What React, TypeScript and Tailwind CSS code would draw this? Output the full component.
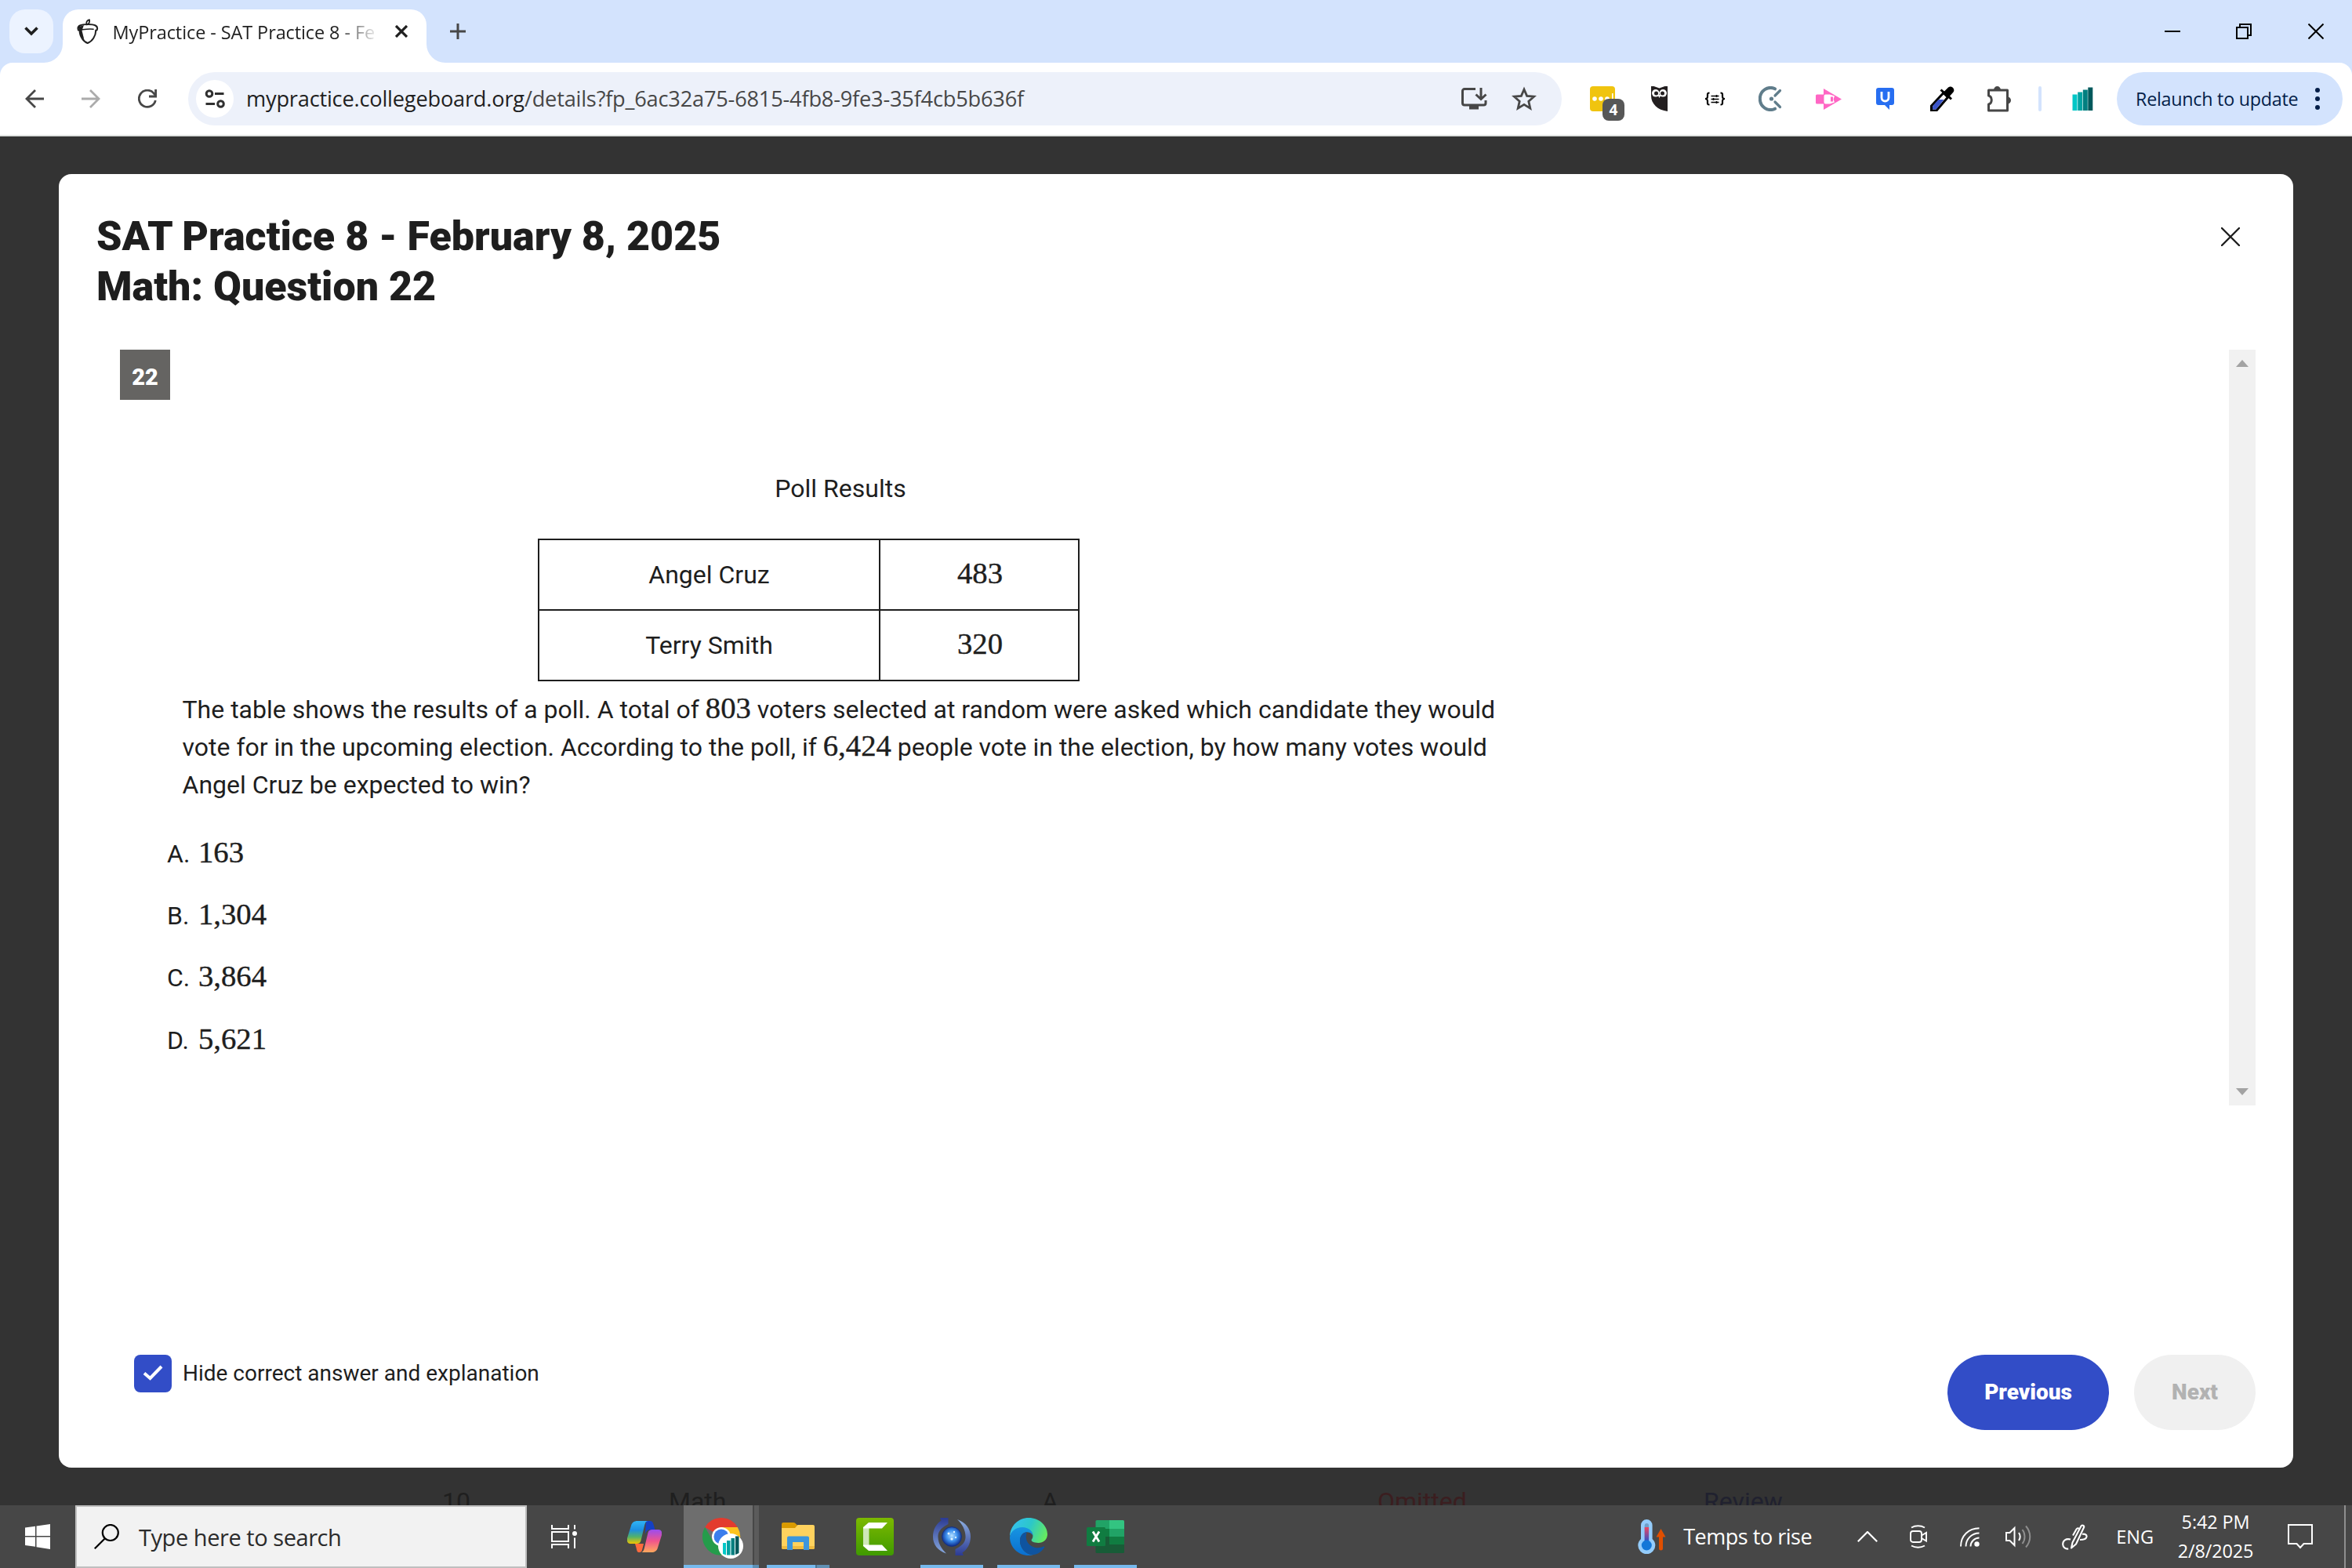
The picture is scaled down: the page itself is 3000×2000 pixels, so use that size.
import type { ReactNode } from "react";

/* ---------- Browser chrome ---------- */

function TabStrip() {
  return (
    <div className="flex h-20 shrink-0 items-start bg-[#d3e3fd] pt-3">
      <button className="ml-3 flex h-14 w-14 items-center justify-center rounded-[20px] bg-[#ecf3ff]">
        <svg width="18" height="14" viewBox="0 0 18 14" fill="none" stroke="#1f1f1f" strokeWidth="3.6">
          <path d="M1.5 2.5 9 10l7.5-7.5" />
        </svg>
      </button>
      <div className="relative ml-3 flex h-[68px] w-[464px] items-start rounded-t-[20px] bg-white">
        <svg className="absolute -left-6 bottom-0" width="24" height="24" viewBox="0 0 24 24">
          <path d="M24 0A24 24 0 0 1 0 24H24Z" fill="#fff" />
        </svg>
        <svg className="absolute -right-6 bottom-0" width="24" height="24" viewBox="0 0 24 24">
          <path d="M0 0A24 24 0 0 0 24 24H0Z" fill="#fff" />
        </svg>
        <svg className="ml-[18px] mt-3" width="28" height="32" viewBox="0 0 28 32" fill="none" stroke="#1f1f1f" strokeLinecap="round" strokeLinejoin="round">
          <path d="M12.600 7.400C11.400 4.400 13 1.900 16 1.200c.6 2.600 0 5-3 6.200" strokeWidth="1.800" />
          <path d="M2 14.500C-.500 8.500 6 7 14 7s14 1.500 11.600 7.500" strokeWidth="2" />
          <path d="M2.200 14.500c6-.600 13-2.500 18.800-1.200" strokeWidth="1.600" />
          <path d="M3.600 14.500C3.600 23 9 29.600 13.800 31 19.500 29 24.400 22 24.200 14.500" strokeWidth="2" />
          <path d="M1.500 10.500 9 8 6.500 15l3 12C5.500 23.500 3.600 18 3 14.500Z" fill="#1f1f1f" stroke="none" />
        </svg>
        <div className="ml-[17.5px] mt-px h-14 w-[335.5px] overflow-hidden whitespace-nowrap bg-gradient-to-r from-[#1f1f1f] from-85% to-[#1f1f1f]/10 bg-clip-text font-['Open_Sans'] text-[23.5px] leading-[56px] tracking-[-0.1px] text-transparent">
          MyPractice - SAT Practice 8 - Fe
        </div>
        <svg className="ml-[25px] mt-5" width="16" height="16" viewBox="0 0 16 16" stroke="#1f1f1f" strokeWidth="3.2">
          <path d="M1 1l14 14M15 1 1 15" />
        </svg>
      </div>
      <svg className="ml-[30px] mt-[18px]" width="20" height="20" viewBox="0 0 20 20" stroke="#474747" strokeWidth="3">
        <path d="M10 0v20M0 10h20" />
      </svg>
      <div className="flex flex-1 justify-end">
        <svg className="mt-[18px]" width="20" height="20" viewBox="0 0 20 20" stroke="#000" strokeWidth="2">
          <path d="M0 10h20" />
        </svg>
        <svg className="ml-[71px] mt-[18px]" width="20" height="20" viewBox="0 0 20 20" fill="none" stroke="#000" strokeWidth="2">
          <path d="M1 5h14v14H1ZM5 5V1h14v14h-4" />
        </svg>
        <svg className="ml-[72px] mr-9 mt-[18px]" width="20" height="20" viewBox="0 0 20 20" stroke="#000" strokeWidth="2">
          <path d="M.5.5l19 19M19.500.5l-19 19" />
        </svg>
      </div>
    </div>
  );
}

function Omnibox() {
  return (
    <div className="ml-10 flex h-[68px] w-[1752px] items-center rounded-full bg-[#edf1fa]">
      <div className="ml-2.5 flex h-12 w-12 items-center justify-center rounded-full bg-white">
        <svg width="26" height="26" viewBox="0 0 26 26" fill="none" stroke="#303030" strokeWidth="3">
          <circle cx="6" cy="6.500" r="3.800" />
          <path d="M13 6.500h11.500M1.500 19.500H13" />
          <circle cx="20.500" cy="19.500" r="3.800" />
        </svg>
      </div>
      <div className="ml-4 h-[68px] whitespace-nowrap font-['Open_Sans'] text-[27.2px] leading-[67px] tracking-[-0.2px] text-[#1f1f1f]">
        mypractice.collegeboard.org<span className="text-[#474747]">/details?fp_6ac32a75-6815-4fb8-9fe3-35f4cb5b636f</span>
      </div>
      <div className="mr-8 flex flex-1 items-center justify-end">
        <svg width="34" height="30" viewBox="0 0 34 30" fill="none" stroke="#474747" strokeWidth="3">
          <path d="M19 2.500H5a2.500 2.500 0 0 0-2.500 2.500v15.500A2.500 2.500 0 0 0 5 23h24.500a2.500 2.500 0 0 0 2.500-2.500V17" />
          <path d="M11 23h12v5.500H11Z" fill="#474747" stroke="none" />
          <path d="M26 1v13.500M19.500 9.500l6.500 6 6.500-6" />
        </svg>
        <svg className="ml-[31px]" width="32" height="32" viewBox="0 0 32 32" fill="none" stroke="#474747" strokeWidth="2.800">
          <path d="M16 4l3.600 8.400 9 .8-6.800 6 2 8.900-7.800-4.700-7.800 4.700 2-8.900-6.800-6 9-.8Z" />
        </svg>
      </div>
    </div>
  );
}

function Extensions() {
  return (
    <>
      <div className="relative ml-9 h-8 w-8">
        <svg width="32" height="32" viewBox="0 0 32 32">
          <rect width="32" height="32" rx="4" fill="#f0c40f" />
          <circle cx="6" cy="16" r="2.800" fill="#fff" />
          <circle cx="14" cy="16" r="2.800" fill="#fff" />
          <circle cx="22" cy="16" r="2.800" fill="#fff" />
          <path d="M28.800 9v9" stroke="#fff" strokeWidth="1.600" />
        </svg>
        <span className="absolute left-4 top-4 flex h-7 w-7 items-center justify-center rounded-[8px] bg-[#575757] font-['Open_Sans'] text-[19px] font-bold leading-none text-white">
          4
        </span>
      </div>
      <svg className="ml-[46px]" width="21" height="32" viewBox="0 0 21 32">
        <path d="M0 0h21v32C8 30.500 0 22 0 12Z" fill="#231f20" />
        <path d="M3.500 0 10.500 2.600 17.500 0Z" fill="#fff" />
        <circle cx="5.800" cy="8.800" r="4.800" fill="#fff" />
        <circle cx="15.200" cy="8.800" r="4.800" fill="#fff" />
        <circle cx="6.500" cy="9" r="2.500" fill="#231f20" />
        <circle cx="14.500" cy="9" r="2.500" fill="#231f20" />
        <path d="M8.500 11h4l-2 4Z" fill="#fff" />
      </svg>
      <svg className="ml-[47px]" width="27" height="18" viewBox="0 0 27 18" fill="none" stroke="#000" strokeWidth="2.200">
        <path d="M6.500 1.500C3.500 1.500 4 3 4 5.500S3.500 9 1 9c2.500 0 3 1 3 3.500s-.500 4 2.500 4" />
        <path d="M20.500 1.500c3 0 2.500 1.500 2.500 4S23.500 9 26 9c-2.500 0-3 1-3 3.500s.500 4-2.500 4" />
        <path d="M8.500 5.500h10M8.500 9.500h10M8.500 13.500h10" strokeWidth="1.600" />
        <path d="M15.500 4v3M11.500 8v3M15.500 12v3" strokeWidth="1.600" />
      </svg>
      <svg className="ml-[42px]" width="30" height="32" viewBox="0 0 30 32" fill="none" stroke="#607d8b" strokeWidth="4" strokeLinecap="round">
        <path d="M21 3.300A13.500 14 0 1 0 21 28.700" />
        <path d="M21 12l6.500-6.500M21 20l6.500 6.500" strokeWidth="3.200" />
        <circle cx="16.500" cy="16" r="2.600" fill="#607d8b" stroke="none" />
      </svg>
      <svg className="ml-[43px]" width="33" height="27" viewBox="0 0 33 27" fill="#ff66c4">
        <path d="M1.500 7.500H10v12H1.500A1.500 1.500 0 0 1 0 18V9A1.500 1.500 0 0 1 1.500 7.500Z" />
        <path d="M10 0 33 13.500 10 27Z" />
        <path d="M12.500 7.500H18l6 2-1.500 4 1.500 4-6 2h-5.500a2 2 0 0 1-2-2v-8a2 2 0 0 1 2-2Z" fill="#fff" />
        <path d="M19 10.500h3v6h-3Z" />
      </svg>
      <svg className="ml-11" width="23" height="28" viewBox="0 0 23 28">
        <path d="M3 0h17a3 3 0 0 1 3 3v16a3 3 0 0 1-3 3h-3v6l-6-6H3a3 3 0 0 1-3-3V3a3 3 0 0 1 3-3Z" fill="#276ef1" />
        <path d="M7 5v7.500a4.500 4.500 0 0 0 9 0V5" fill="none" stroke="#fff" strokeWidth="2.800" />
      </svg>
      <svg className="ml-[46px]" width="31" height="32" viewBox="0 0 31 32">
        <path d="M1.500 31v-6L17 8.500 22.500 14 8 31Z" fill="#fff" stroke="#000" strokeWidth="3" />
        <path d="M3 29.500v-4L10.500 17h7L7.500 29.500Z" fill="#3b55c9" />
        <path d="M12.500 5.500l2-2 3.500 3L23 1.500c4-3.500 9.500 2 6.500 6L25 12.500l3 3-2 2Z" fill="#000" />
      </svg>
      <svg className="ml-10" width="34" height="34" viewBox="0 0 34 34" fill="none" stroke="#474747" strokeWidth="3">
        <path d="M3.500 6h24v26h-24V24c5-1.500 5-9.500 0-11Z" strokeLinejoin="round" />
        <path d="M10 6a4.500 5 0 0 1 9 0ZM27.500 14.500a4.500 4.500 0 0 1 0 9Z" fill="#474747" stroke="none" />
      </svg>
      <div className="ml-[33px] h-8 w-1 rounded-full bg-[#d3e3fd]" />
      <svg className="ml-[39px]" width="27" height="30" viewBox="0 0 27 30">
        <path d="M.5 9.500h6V30h-6Z" fill="#00c7c7" />
        <path d="M7.200 6.500h6V30h-6Z" fill="#00a3a3" />
        <path d="M13.800 3.500h6V30h-6Z" fill="#007f80" />
        <path d="M20.300.5h6V30h-6Z" fill="#00595c" />
      </svg>
    </>
  );
}

function Toolbar() {
  return (
    <div className="h-[94px] shrink-0 bg-[#d3e3fd]">
      <div className="flex h-[94px] items-center rounded-t-2xl border-b-2 border-[#e0e3e1] bg-white">
        <svg className="ml-8" width="24" height="24" viewBox="0 0 24 24" fill="none" stroke="#474747" strokeWidth="2.800">
          <path d="M24 12H2M13 1 2 12l11 11" />
        </svg>
        <svg className="ml-12" width="24" height="24" viewBox="0 0 24 24" fill="none" stroke="#ababab" strokeWidth="2.800">
          <path d="M0 12h22M11 1l11 11-11 11" />
        </svg>
        <svg className="ml-12" width="24" height="24" viewBox="0 0 24 24" fill="none" stroke="#474747" strokeWidth="2.800">
          <path d="M22.300 14A10.600 10.600 0 1 1 20 4.900l2.500 3" />
          <path d="M22.600 0v9H14" />
        </svg>
        <Omnibox />
        <Extensions />
        <button className="ml-[30px] flex h-[68px] w-[288px] items-center rounded-full bg-[#d3e3fd] text-[#041e49]">
          <span className="ml-6 whitespace-nowrap font-['Open_Sans'] text-[23.3px] leading-[66px] tracking-[-0.25px]">Relaunch to update</span>
          <svg className="ml-[21px]" width="8" height="28" viewBox="0 0 8 28" fill="#041e49">
            <circle cx="4" cy="3" r="3" />
            <circle cx="4" cy="14" r="3" />
            <circle cx="4" cy="25" r="3" />
          </svg>
        </button>
      </div>
    </div>
  );
}

/* ---------- Question modal ---------- */

function MathText({ children }: { children: ReactNode }) {
  return <span className="font-['Liberation_Serif',serif] text-[38.7px] leading-none [-webkit-text-stroke:0.4px_#1e1e1e]">{children}</span>;
}

const results = [
  { name: "Angel Cruz", votes: "483" },
  { name: "Terry Smith", votes: "320" },
];

const choices = [
  { letter: "A.", value: "163" },
  { letter: "B.", value: "1,304" },
  { letter: "C.", value: "3,864" },
  { letter: "D.", value: "5,621" },
];

function Question() {
  return (
    <div className="flex-1">
      <div className="ml-[30px] flex h-16 w-16 justify-center bg-[#656462] text-[29px] font-black leading-[71px] text-white">22</div>
      <div className="ml-[111px] mt-[89px] w-[1676px] text-center text-[32px] leading-[48px]">Poll Results</div>
      <div className="ml-[563px] mt-10 w-[691px] divide-y-2 divide-[#1e1e1e] border-2 border-[#1e1e1e]">
        {results.map((r) => (
          <div key={r.name} className="flex h-[88px] divide-x-2 divide-[#1e1e1e] text-center text-[32px] leading-[88px] first:h-[90px]">
            <div className="w-[435px]">{r.name}</div>
            <div className="flex-1">
              <div className="pl-0.5 font-['Liberation_Serif',serif] text-[38.7px] leading-[84px] [-webkit-text-stroke:0.4px_#1e1e1e]">{r.votes}</div>
            </div>
          </div>
        ))}
      </div>
      <div className="ml-[109.5px] mt-3 whitespace-nowrap text-[32px] leading-[48px]">
        <div className="h-12">
          The table shows the results of a poll. A total of <MathText>803</MathText> voters selected at random were asked which candidate they would
        </div>
        <div className="h-12">
          vote for in the upcoming election. According to the poll, if <MathText>6,424</MathText> people vote in the election, by how many votes would
        </div>
        <div className="h-12">Angel Cruz be expected to win?</div>
      </div>
      <div className="ml-[90px] mt-10 flex flex-col gap-[31.2px] text-[32px] leading-[48px]">
        {choices.map((c) => (
          <div key={c.letter} className="flex h-12">
            <span className="w-10">{c.letter}</span>
            <span className="font-['Liberation_Serif',serif] text-[38.7px] leading-[44px] [-webkit-text-stroke:0.4px_#1e1e1e]">{c.value}</span>
          </div>
        ))}
      </div>
    </div>
  );
}

function Modal() {
  return (
    <div className="mx-[75px] mt-12 h-[1650px] shrink-0 rounded-2xl bg-white px-12 pt-12 text-[#1e1e1e]">
      <div className="flex justify-between">
        <h1 className="text-[52px] font-black leading-[64px]">
          SAT Practice 8 - February 8, 2025
          <br />
          Math: Question 22
        </h1>
        <svg className="mr-5 mt-5" width="24" height="24" viewBox="0 0 24 24" stroke="#1e1e1e" strokeWidth="2.400" strokeLinecap="round">
          <path d="M1 1l22 22M23 1 1 23" />
        </svg>
      </div>
      <div className="mt-12 flex h-[964px]">
        <Question />
        <div className="flex w-[34px] flex-col items-center justify-between bg-[#f1f1f1] py-3">
          <svg width="16" height="10" viewBox="0 0 16 10" fill="#a3a3a3">
            <path d="M0 10 8 1l8 9Z" />
          </svg>
          <svg width="16" height="10" viewBox="0 0 16 10" fill="#a3a3a3">
            <path d="M0 0 8 9l8-9Z" />
          </svg>
        </div>
      </div>
      <div className="mt-[318px] flex h-24 justify-between">
        <label className="ml-12 flex h-12 items-center">
          <span className="flex h-12 w-12 items-center justify-center rounded-lg bg-[#324dc7] pb-0.5">
            <svg width="26" height="20" viewBox="0 0 26 20" fill="none" stroke="#fff" strokeWidth="4">
              <path d="M2 10.500l7.500 6.500L24 2" />
            </svg>
          </span>
          <span className="ml-3.5 text-[28px] leading-[48px]">Hide correct answer and explanation</span>
        </label>
        <div className="flex gap-8 text-[28px] font-black leading-[96px]">
          <button className="h-24 w-[206px] rounded-full bg-[#324dc7] text-white">Previous</button>
          <button className="h-24 w-[155px] rounded-full bg-[#f0f0f0] text-[#b2b2b2]">Next</button>
        </div>
      </div>
    </div>
  );
}

/* ---------- Taskbar ---------- */

function TaskTile({ children, running }: { children: ReactNode; running?: boolean }) {
  return (
    <div className="relative flex h-20 w-[98px] shrink-0 items-center justify-center">
      {children}
      {running && <div className="absolute bottom-0 left-[9px] h-1 w-20 bg-[#76b9ed]" />}
    </div>
  );
}

function Taskbar() {
  return (
    <div className="flex h-20 shrink-0 items-center overflow-hidden bg-[#474747] font-['Open_Sans'] text-white">
      <div className="flex w-24 justify-center">
        <svg width="32" height="32" viewBox="0 0 32 32" fill="#fff">
          <path d="M0 4.600 13 2.800V15H0ZM14.500 2.500 32 0v15H14.500ZM0 16.500h13v12.200L0 27ZM14.500 16.500H32V32l-17.500-2.800Z" />
        </svg>
      </div>
      <div className="flex h-20 w-[576px] items-center border-2 border-[#bfbfbf] bg-[#f2f2f2]">
        <svg className="ml-[22px]" width="32" height="32" viewBox="0 0 32 32" fill="none" stroke="#000" strokeWidth="2.200">
          <circle cx="20.800" cy="11" r="10" />
          <path d="M13.700 18.500.8 31.300" />
        </svg>
        <span className="ml-[25px] mt-0.5 whitespace-nowrap text-[29px] leading-[76px] tracking-[-0.45px] text-[#2b2b2b]">Type here to search</span>
      </div>
      <div className="flex w-24 justify-center">
        <svg width="34" height="30" viewBox="0 0 34 30" fill="none" stroke="#fff" strokeWidth="2">
          <path d="M1 9h21v12H1ZM1 0v5h21V0M1 30v-5h21v5M30 0v5.500M30 16.500V30" />
          <circle cx="30" cy="11" r="3" fill="#fff" stroke="none" />
        </svg>
      </div>
      <div className="flex w-[103px] items-center justify-center pl-1">
        <CopilotIcon />
      </div>
      <div className="relative flex h-20 w-[98px] shrink-0 items-center">
        <div className="flex h-20 w-full pl-px">
          <div className="w-[88px] bg-[#6e6e6e]" />
          <div className="ml-0.5 w-1.5 bg-[#5b5b5b]" />
        </div>
        <div className="absolute left-[25px] top-4">
          <ChromeIcon />
        </div>
        <div className="absolute bottom-0 left-px flex h-1">
          <div className="w-[88px] bg-[#76b9ed]" />
          <div className="w-2 bg-[#5d8fb5]" />
        </div>
      </div>
      <div className="relative flex h-20 w-[98px] shrink-0 items-center justify-center">
        <ExplorerIcon />
        <div className="absolute bottom-0 left-[9px] flex h-1">
          <div className="w-[62px] bg-[#76b9ed]" />
          <div className="w-0.5 bg-[#4d7391]" />
          <div className="w-4 bg-[#5f8fb3]" />
        </div>
      </div>
      <TaskTile>
        <svg width="48" height="48" viewBox="0 0 48 48">
          <defs>
            <linearGradient id="cam" x1="0" y1="0" x2="0" y2="1">
              <stop offset="0" stopColor="#7cb900" />
              <stop offset="1" stopColor="#3f9a00" />
            </linearGradient>
          </defs>
          <rect width="48" height="48" rx="4" fill="url(#cam)" />
          <path d="M9 12.500h7.500v23H9Z" fill="#cfe8b8" />
          <path d="M16 6h24l-7 7.500H9V12Z" fill="#fff" />
          <path d="M16 42h24l-7-7.500H9V36Z" fill="#fff" />
        </svg>
      </TaskTile>
      <TaskTile running>
        <SyncIcon />
      </TaskTile>
      <TaskTile running>
        <EdgeIcon />
      </TaskTile>
      <TaskTile running>
        <ExcelIcon />
      </TaskTile>
      <Tray />
    </div>
  );
}

function CopilotIcon() {
  return (
    <svg width="44" height="40" viewBox="0 0 44 40">
      <defs>
        <linearGradient id="cpA" x1="0" y1="0" x2="0" y2="1">
          <stop offset="0" stopColor="#2fb4f5" />
          <stop offset=".4" stopColor="#1d8fe0" />
          <stop offset=".7" stopColor="#52b26a" />
          <stop offset="1" stopColor="#f2c500" />
        </linearGradient>
        <linearGradient id="cpB" x1="0" y1="0" x2="0" y2="1">
          <stop offset="0" stopColor="#9a4df0" />
          <stop offset=".5" stopColor="#f0548c" />
          <stop offset="1" stopColor="#ffa95c" />
        </linearGradient>
      </defs>
      <path d="M24 0h5c3 0 4 2 5 6l1.500 5H30c-4 0-6 2-7 6Z" fill="#1540c4" />
      <path d="M10 29h11l-1.500 6c-.500 2.500-1 5-4 5-3 0-3-2-4-6Z" fill="#ff6a3d" />
      <path d="M13 0h14c-3 0-4 2-5 6l-4.500 19c-1 3-2.500 4-5.500 4H4c-3 0-5-2.500-4-7L5 6c1-4 4-6 8-6Z" fill="url(#cpA)" />
      <path d="M31 40H17c3 0 4-2 5-6l4.500-19c1-3 2.500-4 5.500-4h8c3 0 5 2.500 4 7l-5 16c-1 4-4 6-8 6Z" fill="url(#cpB)" />
    </svg>
  );
}

function ChromeIcon() {
  return (
    <svg width="54" height="54" viewBox="0 0 54 54">
      <path d="M24 24 3.200 12A24 24 0 0 1 44.800 12Z" fill="#e33b2e" />
      <path d="M24 12h20.800A24 24 0 0 1 24 48l10.400-18Z" fill="#fcc31e" />
      <path d="M3.200 12A24 24 0 0 0 24 48l10.400-18H13.600Z" fill="#249c4b" />
      <circle cx="24" cy="24" r="12" fill="#fff" />
      <circle cx="24" cy="24" r="9.500" fill="#3b7ded" />
      <circle cx="36" cy="36" r="16" fill="#fff" />
      <path d="M26 32h4v15.500l-4-1.500Z" fill="#00c7c7" />
      <path d="M31 29h4.500v18.500H31Z" fill="#00a3a3" />
      <path d="M36.500 26H41v21.500h-4.500Z" fill="#007f80" />
      <path d="M42 23.500h4.500V45l-4.500 2Z" fill="#00595c" />
    </svg>
  );
}

function ExplorerIcon() {
  return (
    <svg width="42" height="36" viewBox="0 0 42 36">
      <path d="M2 0h13c2 0 2.500 1 4 2.500L21 5v4H0V2a2 2 0 0 1 2-2Z" fill="#d99a00" />
      <path d="M0 7h17l3.500-4H40a2 2 0 0 1 2 2v27a2 2 0 0 1-2 2H2a2 2 0 0 1-2-2Z" fill="#ffd25e" />
      <path d="M0 30h42v2a2 2 0 0 1-2 2H2a2 2 0 0 1-2-2Z" fill="#efbb3f" />
      <path d="M9 17.500h24a2 2 0 0 1 2 2V35h-7V25H14v10H7V19.500a2 2 0 0 1 2-2Z" fill="#3c96dd" />
    </svg>
  );
}

function SyncIcon() {
  return (
    <svg width="48" height="48" viewBox="0 0 48 48">
      <defs>
        <radialGradient id="orb" cx=".5" cy=".45" r=".55">
          <stop offset="0" stopColor="#b5e0ff" />
          <stop offset=".5" stopColor="#3f92ee" />
          <stop offset="1" stopColor="#0b2a8c" />
        </radialGradient>
        <linearGradient id="arcL" x1="0" y1="0" x2="0" y2="1">
          <stop offset="0" stopColor="#2b3a92" />
          <stop offset="1" stopColor="#86a8de" />
        </linearGradient>
        <linearGradient id="arcR" x1="0" y1="0" x2="0" y2="1">
          <stop offset="0" stopColor="#8eb0e2" />
          <stop offset="1" stopColor="#2b3a92" />
        </linearGradient>
      </defs>
      <path d="M9 0h10.500v8C9 13 6 19 6.500 25c.500 8 4 14 10.500 20.500C6 42 0 34 0 24 0 14 5 7 10.500 3.500Z" fill="url(#arcL)" />
      <path d="M39 48H28.500v-8C39 35 42 29 41.500 23 41 15 37.500 8 31 2 42 6 48 14 48 24c0 10-5 17-10.500 20.500Z" fill="url(#arcR)" />
      <circle cx="24" cy="24" r="12.400" fill="url(#orb)" stroke="#17307e" strokeWidth="1" />
      <circle cx="20" cy="20" r="1.500" fill="#e4f5ff" />
      <circle cx="27" cy="18" r="1.200" fill="#e4f5ff" />
      <circle cx="24" cy="27" r="1.600" fill="#e4f5ff" />
      <circle cx="29" cy="25" r="1.200" fill="#d0ebff" />
    </svg>
  );
}

function EdgeIcon() {
  return (
    <svg width="48" height="48" viewBox="0 0 24 24">
      <defs>
        <linearGradient id="edA" x1="0" y1=".3" x2="1" y2=".6">
          <stop offset="0" stopColor="#35c1f1" />
          <stop offset=".5" stopColor="#2cc7c9" />
          <stop offset="1" stopColor="#66eb5e" />
        </linearGradient>
        <linearGradient id="edB" x1="0" y1="0" x2="0" y2="1">
          <stop offset="0" stopColor="#1795e2" />
          <stop offset="1" stopColor="#0a6fd0" />
        </linearGradient>
      </defs>
      <path d="M0 11.800C.3 5 5.500 0 12 0c7 0 12 5.200 12 10.500 0 3.300-2.600 5.500-5.800 5.500-3 0-4.400-.9-4.400-1.700 0-.5.9-1 .9-2.800 0-2.500-2.500-5-6.500-5C4 6.500 1 8.800 0 11.800Z" fill="url(#edA)" />
      <path d="M0 12.200C.8 8.500 3.800 6 8 6c4 0 6.800 2.500 6.700 5.500-.1-.9-1.500-2.400-3.700-2.400-3 0-4.700 3-4.500 6 .3 4.500 4 8.600 8.500 8.400-1 .4-2 .5-3 .5-6.500 0-12-5.300-12-11.800Z" fill="url(#edB)" />
      <path d="M11 9.100c-3 .2-4.700 3-4.500 6 .3 5 4.500 8.900 9 8.400 3-.5 5.300-2.500 6.600-4.700.2-.4-.1-.7-.5-.5-6 2.700-11.300-1.500-11.200-6 0-1.500.3-2.500.6-3.200Z" fill="#0f54a0" />
    </svg>
  );
}

function ExcelIcon() {
  return (
    <svg width="48" height="42" viewBox="0 0 48 42">
      <path d="M13 0h16v11H11.500V1.500A1.500 1.500 0 0 1 13 0Z" fill="#21a366" />
      <path d="M29 0h17.500A1.500 1.500 0 0 1 48 1.500V11H29Z" fill="#33c481" />
      <path d="M11.500 11H29v10H11.500Z" fill="#107c41" />
      <path d="M29 11h19v10H29Z" fill="#21a366" />
      <path d="M11.500 21H29v10H11.500Z" fill="#185c37" />
      <path d="M29 21h19v10H29Z" fill="#107c41" />
      <path d="M11.500 31H48v9.500a1.500 1.500 0 0 1-1.500 1.500H13a1.500 1.500 0 0 1-1.500-1.500Z" fill="#185c37" />
      <rect y="9" width="24" height="24" rx="1.500" fill="#107c41" />
      <path d="M8 14.500l8 13M16 14.500l-8 13" stroke="#fff" strokeWidth="2.800" fill="none" />
    </svg>
  );
}

function Tray() {
  return (
    <div className="flex h-20 flex-1 items-center justify-end whitespace-nowrap">
      <svg width="36" height="44" viewBox="0 0 36 44">
        <defs>
          <linearGradient id="thermo" x1="0" y1="0" x2="0" y2="1">
            <stop offset="0" stopColor="#f0455e" />
            <stop offset="1" stopColor="#1454d6" />
          </linearGradient>
        </defs>
        <path d="M4 7.500a7.300 7.500 0 0 1 14.600 0V25a11 11 0 1 1-14.600 0Z" fill="#94ccfb" />
        <path d="M8.700 8a2.700 3 0 0 1 5.400 0v20H8.700Z" fill="#6f9fc9" />
        <path d="M8.700 10h5.400v20H8.700Z" fill="url(#thermo)" />
        <circle cx="11.300" cy="33" r="6.500" fill="#1377d8" />
        <path d="M29.500 12l6 10.500h-3.500V37a2.500 2.500 0 0 1-5 0V22.500h-3.500Z" fill="#e04f00" />
      </svg>
      <span className="ml-[22px] text-[27px] leading-[80px] tracking-[-0.48px]">Temps to rise</span>
      <svg className="ml-[58px]" width="26" height="14" viewBox="0 0 26 14" fill="none" stroke="#fff" strokeWidth="2.200">
        <path d="M.8 13.200 13 1l12.200 12.200" />
      </svg>
      <svg className="ml-[41px]" width="22" height="30" viewBox="0 0 22 30" fill="none" stroke="#fff" strokeWidth="1.900">
        <rect x="1" y="8" width="14" height="14" rx="3" />
        <path d="M15 13.500l6-3.500v10.500l-6-3.500ZM2 3.500c5-3 12-3 17 0M2 26.500c5 3 12 3 17 0" />
      </svg>
      <svg className="ml-[42px]" width="25" height="25" viewBox="0 0 25 25" fill="none" stroke="#fff" strokeWidth="1.900">
        <path d="M1 24.500C1 11 11 1.200 24.500 1.200M7.500 24.500C7.500 15 15 7.500 24.500 7.500M13.500 24.500c0-6 5-11 11-11" />
        <circle cx="21.500" cy="21.500" r="3.200" fill="#fff" stroke="none" />
      </svg>
      <svg className="ml-[33px]" width="34" height="30" viewBox="0 0 34 30" fill="none" stroke="#fff" strokeWidth="2">
        <path d="M1 10h4.500l6-6v22l-6-6H1Z" />
        <path d="M17 10c2 3 2 7 0 10" />
        <path d="M21.500 6c4 5 4 13 0 18M26 1.500c7 8 7 19 0 27" stroke="#8e8e8e" />
      </svg>
      <svg className="ml-[38px]" width="33" height="33" viewBox="0 0 33 33" fill="none" stroke="#fff" strokeWidth="2.100">
        <path d="M12 30.500l1.500-7L24.500 2.500c1-2 4.500-.5 3.500 1.800L18 25.500Z" strokeLinejoin="round" />
        <path d="M23 6.500c-2-2-3.500-1.500-4.500 0L14 14.500M11 19.500C5 18 1 21 1.200 26c.2 4 3.500 6 7 5.500M26 13c3-1 6 .5 5.500 3.200-.5 2.300-4 3.800-8.500 3.800" />
      </svg>
      <span className="ml-9 text-[23.5px] leading-[80px]">ENG</span>
      <div className="ml-[29px] flex w-[100px] flex-col text-center text-[23.4px] leading-[37px] tracking-[-0.1px]">
        <span>5:42 PM</span>
        <span>2/8/2025</span>
      </div>
      <svg className="ml-[42px]" width="32" height="32" viewBox="0 0 32 32" fill="none" stroke="#fff" strokeWidth="2">
        <path d="M1 1h30v24H20.500L16 30l-4.500-5H1Z" />
      </svg>
      <div className="ml-10 mr-2 h-20 w-0.5 bg-[#8f8f8f]" />
    </div>
  );
}

/* ---------- Page ---------- */

export default function App() {
  return (
    <div className="flex h-[2000px] w-[3000px] flex-col overflow-hidden bg-[#333] font-['Roboto',sans-serif]">
      <TabStrip />
      <Toolbar />
      <div className="flex h-[1746px] shrink-0 flex-col overflow-hidden bg-[#333]">
        <Modal />
        <div className="mt-[19px] flex shrink-0 whitespace-nowrap text-[32px] leading-[48px] text-[#1f1f1f]">
          <span className="ml-[564px] w-[289px]">10</span>
          <span className="w-[476px]">Math</span>
          <span className="w-[428px]">A</span>
          <span className="w-[416px] text-[#3b1e20]">Omitted</span>
          <span className="text-[#20212f]">Review</span>
        </div>
      </div>
      <Taskbar />
    </div>
  );
}
